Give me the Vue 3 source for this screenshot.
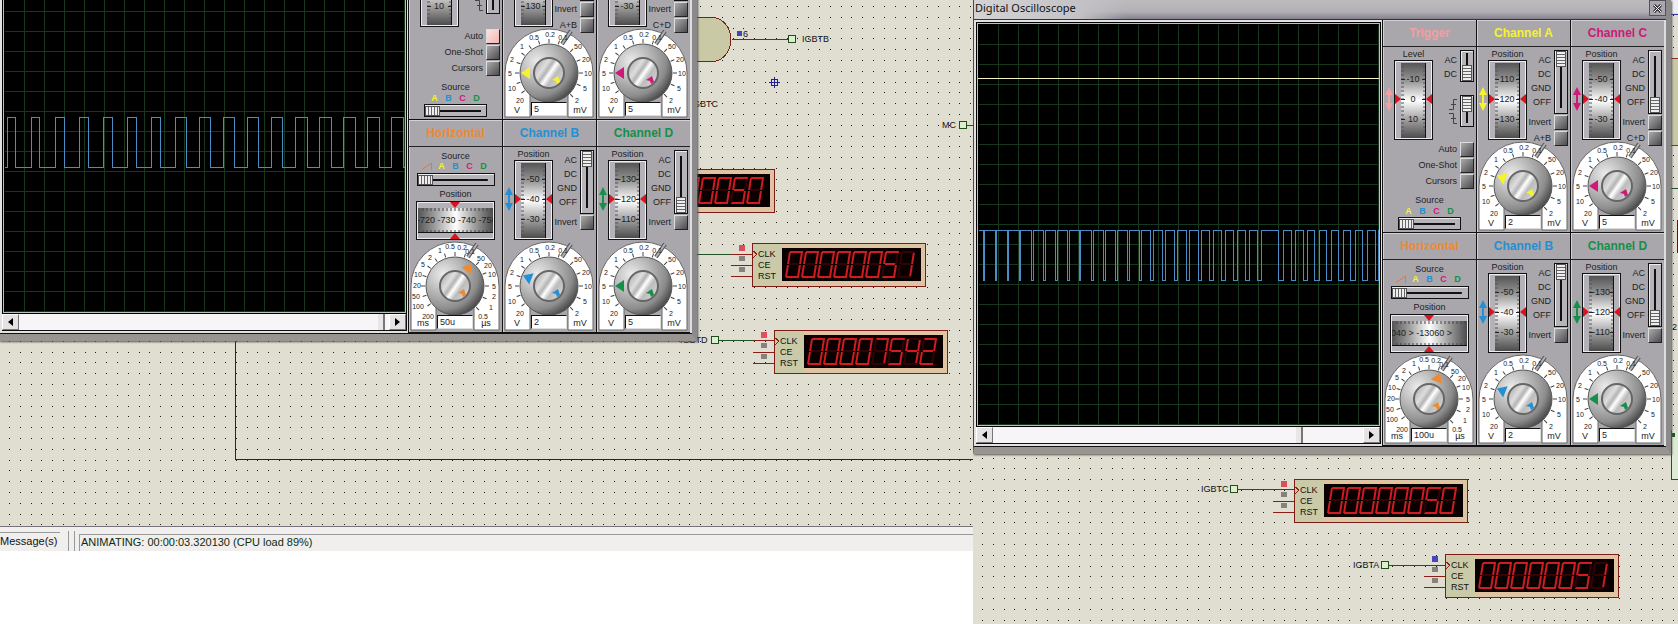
<script setup>
const vertical = (title, key, color, scale, coupling, angle, volts, sum) => ({
  kind: 'channel', title, key, color, caption: 'Position', scale, coupling, angle, value: volts, sum,
})

const timeScale = [
  ['0.5', -14, -120], ['0.2', 20, -118], ['0.1', 46, -105], ['50', 79, -84], ['20', 100, -64],
  ['10', 112, -35], ['5', 118, 0], ['2', 116, 29], ['1', 108, 64], ['0.5', 84, 89],
  ['1', -46, -108], ['2', -74, -88], ['5', -97, -66], ['10', -112, -36], ['20', -114, -4],
  ['50', -116, 31], ['100', -110, 61], ['200', -82, 89],
]
const voltScale = [
  ['0.2', 2, -118], ['0.1', 43, -108], ['50', 86, -82], ['20', 110, -42], ['10', 118, 0],
  ['5', 108, 44], ['2', 84, 81], ['0.5', -44, -108], ['1', -82, -80], ['2', -110, -42],
  ['5', -118, 0], ['10', -112, 45], ['20', -88, 82],
]
const tickAngles = [-126, -108, -90, -72, -54, -36, -18, 0, 18, 45, 67, 90, 112, 135]

function squareWave(intervals, startHigh) {
  const high = 206
  const low = 256
  let d = `M0 ${startHigh ? high : low}`
  for (const [a, b] of intervals) {
    d += startHigh ? `H${a}V${low}H${b}V${high}` : `H${a}V${high}H${b}V${low}`
  }
  return d + 'H401'
}

const pulses = [8, 8, 9, 9, 9, 9, 9, 11, 11, 11, 11, 11, 12, 12, 12, 12, 12]
const leftWave = squareWave(pulses.map((w, i) => [3 + i * 24, 3 + i * 24 + w]), false)
const rightWave = squareWave([
  [5, 6], [17, 18], [29, 30], [41, 42], [53, 55], [65, 67], [77, 79], [89, 91], [101, 102], [113, 115],
  [125, 127], [137, 139], [149, 151], [161, 163], [172, 175], [184, 187], [196, 199], [208, 211],
  [220, 223], [231, 235], [243, 247], [255, 259], [267, 271], [279, 283], [300, 305], [313, 317],
  [325, 329], [336, 341], [348, 353], [360, 365], [372, 377], [384, 389], [397, 400],
], true)

function scope(id, o) {
  return {
    id, wave: o.wave, trace: o.trace, thumb: o.thumb,
    cells: [
      { kind: 'trigger', title: 'Trigger', key: 't', color: '#f2a0a2', caption: 'Level', scale: ['-10', '0', '10'], auto: o.auto },
      vertical('Channel A', 'a', '#f6f22c', ['110', '120', '130'], 0, o.angleA, o.voltA, 'A+B'),
      vertical('Channel C', 'c', '#d01878', ['-50', '-40', '-30'], 3, 0, '5', 'C+D'),
      { kind: 'horizontal', title: 'Horizontal', key: 'h', color: '#ee8a32', strip: o.strip, angle: o.angleH, value: o.time },
      vertical('Channel B', 'b', '#2490d4', ['-50', '-40', '-30'], 0, 22, '2', ''),
      vertical('Channel D', 'd', '#149048', ['-130', '-120', '-110'], 3, 0, '5', ''),
    ],
  }
}

const panes = [
  {
    id: 'left', dotX: 9, dotY: 6,
    scope: scope('left', { wave: leftWave, trace: false, thumb: 97, auto: true, angleA: 0, voltA: '5', strip: '-720 -730 -740 -750', angleH: 127, time: '50u' }),
    counters: [
      { x: 601, y: 169, value: '00000050', mark: '#d85058' },
      { x: 752, y: 243, value: '00000051', mark: '#d85058' },
      { x: 774, y: 330, value: '00007542', mark: '#e0505c' },
    ],
  },
  {
    id: 'right', dotX: 9, dotY: 4,
    scope: scope('right', { wave: rightWave, trace: true, thumb: 82, auto: false, angleA: 22, voltA: '2', strip: '040 > -13060 >', angleH: 113, time: '100u' }),
    counters: [
      { x: 321, y: 479, value: '00000050', mark: '#d85058' },
      { x: 472, y: 554, value: '00000051', mark: '#4a48b8' },
    ],
  },
]

const segments = {
  a: [0, 0, 13, 0], b: [12, 1, 12, 12], c: [12, 13, 12, 24], d: [0, 25, 13, 25],
  e: [0, 13, 0, 25], f: [0, 0, 0, 12], g: [1, 12, 11, 12],
}
const lit = { 0: 'abcdef', 1: 'bc', 2: 'abged', 4: 'fgbc', 5: 'afgcd', 7: 'abc' }
const dots = [0, 11, 22, 32, 43]
</script>

<template>
  <main class="page">
    <svg class="defs" aria-hidden="true">
      <defs>
        <linearGradient id="drum" x1="0" y1="0" x2="0" y2="1">
          <stop offset="0" stop-color="#555" /><stop offset=".25" stop-color="#9a9a9a" />
          <stop offset=".5" stop-color="#fff" /><stop offset=".75" stop-color="#a2a2a2" />
          <stop offset="1" stop-color="#4c4c4c" />
        </linearGradient>
        <linearGradient id="drumWide">
          <stop offset="0" stop-color="#555" /><stop offset=".25" stop-color="#a5a5a5" />
          <stop offset=".5" stop-color="#fff" /><stop offset=".75" stop-color="#a0a0a0" />
          <stop offset="1" stop-color="#4c4c4c" />
        </linearGradient>
        <radialGradient id="knob" cx=".3" cy=".3" r=".8">
          <stop offset="0" stop-color="#ececec" /><stop offset=".4" stop-color="#b9b9b9" />
          <stop offset=".75" stop-color="#8c8c8c" /><stop offset="1" stop-color="#3e3e3e" />
        </radialGradient>
        <linearGradient id="cap" x1="0" y1=".15" x2="1" y2=".85">
          <stop offset="0" stop-color="#a8a8a8" /><stop offset=".3" stop-color="#dedede" />
          <stop offset=".42" stop-color="#b4b4b4" /><stop offset=".52" stop-color="#fff" />
          <stop offset=".66" stop-color="#bcbcbc" /><stop offset="1" stop-color="#d8d8d8" />
        </linearGradient>
      </defs>
    </svg>

    <section v-for="pane in panes" :key="pane.id" class="pane" :class="'pane-' + pane.id">
      <div class="canvas">
        <svg class="schematic">
          <defs>
            <pattern :id="'dots-' + pane.id" :x="pane.dotX" :y="pane.dotY" width="54" height="54" patternUnits="userSpaceOnUse">
              <template v-for="y in dots" :key="y">
                <rect v-for="x in dots" :key="x" :x="x" :y="y" width="1" height="1" fill="#1c1c18" />
              </template>
            </pattern>
          </defs>
          <rect width="100%" height="100%" :fill="`url(#dots-${pane.id})`" />

          <g v-if="pane.id === 'left'" fill="none" shape-rendering="crispEdges">
            <path d="M235.500 330V459.500H2000" stroke="#1c1a8c" />
            <path d="M690 17.500H712A19 22 0 0 1 712 61.500H690Z" fill="#cac9a6" stroke="#7c2014" />
            <path d="M732 39.500H745" stroke="#8c1c14" />
            <path d="M745 39.500H788M690 254.500H731M718 340.500H753M967 125.500H980" stroke="#205428" />
            <path d="M731 254.500H752M753 340.500H774" stroke="#8c1c14" />
            <path d="M788.500 35.500h7v7h-7zM711.500 336.500h7v7h-7zM959.500 121.500h7v7h-7z" fill="#dcf0cc" stroke="#204c20" />
            <rect x="737" y="31" width="5" height="5" fill="#4a44b0" />
            <path d="M774.500 77V88M769 82.500H780M771.500 79.500h6v6h-6z" stroke="#20209c" />
          </g>
          <g v-if="pane.id === 'left'" class="net">
            <text x="743" y="37">6</text>
            <text x="802" y="42">IGBTB</text>
            <text x="693" y="107">GBTC</text>
            <text x="942" y="128">MC</text>
            <text x="680" y="343">IGBTD</text>
          </g>

          <g v-if="pane.id === 'right'" fill="none" shape-rendering="crispEdges">
            <rect x="698" y="0" width="40" height="13" fill="#f0f0f4" />
            <path d="M698 14.500H740" stroke="#3838a0" />
            <path d="M690 58.500H740V145.500H690" fill="#cac9a6" stroke="#8c2c1c" />
            <path d="M690 188.500H740M690 435.500H740" stroke="#205428" />
            <rect x="704" y="220" width="30" height="33" fill="#6c0c10" />
            <path d="M698.500 430V479.500H740V436" fill="#dcecd4" stroke="#205428" />
            <rect x="698" y="433" width="4" height="4" fill="#205428" />
            <path d="M265 489.500H300M416 565.500H451" stroke="#205428" />
            <path d="M300 489.500H321M451 565.500H472" stroke="#8c1c14" />
            <path d="M257.500 485.500h7v7h-7zM408.500 561.500h7v7h-7z" fill="#dcf0cc" stroke="#204c20" />
          </g>
          <g v-if="pane.id === 'right'" class="net">
            <text x="228" y="492">IGBTC</text>
            <text x="380" y="568">IGBTA</text>
            <text x="699" y="330">2</text>
          </g>

          <g v-for="c in pane.counters" :key="c.x" :transform="`translate(${c.x} ${c.y})`">
            <g shape-rendering="crispEdges">
              <rect x=".5" y=".5" width="173" height="43" fill="#dec4a2" stroke="#7c1c14" />
              <rect x="1" y="1" width="29" height="42" fill="#cacaa8" />
              <path d="M-21 22.500H0M-21 33.500H0" stroke="#8c1c14" />
              <path d="M1 8l4 3-4 4" fill="none" stroke="#8c1c14" />
              <rect x="-13" y="2" width="6" height="6" :fill="c.mark" />
              <rect x="-13" y="13" width="6" height="5" fill="#88827e" />
              <rect x="-13" y="24" width="6" height="5" fill="#88827e" />
              <rect x="30" y="5" width="139" height="33" fill="#0a0000" />
            </g>
            <g class="pins">
              <text x="6" y="14">CLK</text><text x="6" y="25">CE</text><text x="6" y="36">RST</text>
            </g>
            <g role="img" :aria-label="c.value">
              <g v-for="(n, i) in c.value" :key="i" :transform="`translate(${38 + i * 16} 9) skewX(-9)`">
                <line
                  v-for="(s, name) in segments" :key="name" :x1="s[0]" :y1="s[1]" :x2="s[2]" :y2="s[3]"
                  stroke-width="2" :stroke="lit[n].includes(name) ? '#d01c20' : '#300406'"
                />
              </g>
            </g>
          </g>
        </svg>

        <article class="window">
          <header class="titlebar">
            <span class="caption">Digital Oscilloscope</span>
            <button class="close" aria-label="Close">
              <svg width="9" height="9" viewBox="0 0 9 9"><path d="M1 1l7 7M8 1l-7 7" stroke="#333" stroke-width="3" /><path d="M1 1l7 7M8 1l-7 7" stroke="#fff" /></svg>
            </button>
          </header>
          <div class="body">
            <div class="display">
              <svg class="screen" width="401" height="401" viewBox="0 0 401 401" shape-rendering="crispEdges" fill="none">
                <path v-for="n in 20" :key="n" :d="`M${n * 20} 0V401M0 ${n * 20}H401`" stroke="#18381e" transform="translate(.5 .5)" />
                <path v-if="pane.scope.trace" d="M0 54.500H401" stroke="#f4f0c0" />
                <path :d="pane.scope.wave" stroke="#4a8cc4" transform="translate(.5 .5)" />
              </svg>
              <div class="scroll">
                <button aria-label="Scroll left"><svg width="5" height="8" viewBox="0 0 5 8"><path d="M5 0v8L0 4z" /></svg></button>
                <div class="rail"><span class="thumb" :style="{ left: pane.scope.thumb + '%' }"></span></div>
                <button aria-label="Scroll right"><svg width="5" height="8" viewBox="0 0 5 8"><path d="M0 0v8l5-4z" /></svg></button>
              </div>
            </div>

            <div class="controls">
              <section v-for="cell in pane.scope.cells" :key="cell.key" class="cell">
                <h2 class="name" :style="{ color: cell.color }">{{ cell.title }}</h2>

                <div v-if="cell.kind !== 'horizontal'" class="upper">
                  <svg class="arrows" width="8" height="24" viewBox="0 0 8 24" :fill="cell.color"><path d="M4 0L8 8H5V16H8L4 24L0 16H3V8H0Z" /></svg>
                  <div class="drum">
                    <span class="small">{{ cell.caption }}</span>
                    <svg width="39" height="80" viewBox="0 0 39 80">
                      <rect x=".5" y=".5" width="38" height="79" fill="#b4b2b8" stroke="#111" />
                      <path d="M1.500 79V1.500H38M37.500 2V78.500H2" fill="none" stroke="#eee" />
                      <rect x="7" y="3" width="25" height="75" fill="url(#drum)" />
                      <path v-for="n in 18" :key="n" :d="`M7 ${n * 4 + 3}h3M29 ${n * 4 + 3}h3`" stroke="#555" />
                      <path d="M7 19.500h4M28 19.500h4M7 39.500h4M28 39.500h4M7 59.500h4M28 59.500h4" stroke="#222" />
                      <text v-for="(s, i) in cell.scale" :key="s" x="19" :y="22 + i * 20" text-anchor="middle" class="t9">{{ s }}</text>
                      <path d="M31.500 3V78" stroke="#111" />
                      <path d="M1 34v10l6-5zM38 34v10l-6-5z" fill="#d81420" />
                    </svg>
                  </div>

                  <div v-if="cell.kind === 'channel'" class="side">
                    <div class="select">
                      <label class="stops" :for="`${pane.id}-${cell.key}-in`"><span>AC</span><span>DC</span><span>GND</span><span>OFF</span></label>
                      <input :id="`${pane.id}-${cell.key}-in`" class="vert" type="range" min="0" max="3" :value="cell.coupling">
                    </div>
                    <div class="toggle"><label :for="`${pane.id}-${cell.key}-inv`">Invert</label><button :id="`${pane.id}-${cell.key}-inv`" class="key"></button></div>
                    <div v-if="cell.sum" class="toggle"><label :for="`${pane.id}-${cell.key}-sum`">{{ cell.sum }}</label><button :id="`${pane.id}-${cell.key}-sum`" class="key"></button></div>
                  </div>
                  <div v-else class="side">
                    <div class="select">
                      <label class="stops" :for="`${pane.id}-t-cpl`"><span>AC</span><span>DC</span></label>
                      <input :id="`${pane.id}-t-cpl`" class="vert short" type="range" min="0" max="1" value="1">
                    </div>
                    <div class="select edge">
                      <svg width="8" height="27" viewBox="0 0 8 27" fill="none" stroke="#444"><path d="M0 11.500H4.500V1.500H8M2 6.500H7M0 15.500H4.500V25.500H8M2 20.500H7" /></svg>
                      <input class="vert short" type="range" min="0" max="1" value="0" aria-label="Trigger edge">
                    </div>
                  </div>
                </div>

                <template v-if="cell.kind === 'trigger'">
                  <div class="modes">
                    <div v-for="m in ['Auto', 'One-Shot', 'Cursors']" :key="m" class="toggle">
                      <label :for="`${pane.id}-${m}`">{{ m }}</label>
                      <button :id="`${pane.id}-${m}`" class="key" :class="{ on: m === 'Auto' && cell.auto }"></button>
                    </div>
                  </div>
                  <div class="source">
                    <label class="small" :for="`${pane.id}-t-src`">Source</label>
                    <div class="letters"><b class="a">A</b><b class="b">B</b><b class="c">C</b><b class="d">D</b></div>
                    <input :id="`${pane.id}-t-src`" class="horiz" type="range" min="0" max="3" value="0">
                  </div>
                </template>

                <div v-if="cell.kind === 'horizontal'" class="upper timing">
                  <label class="small" :for="`${pane.id}-h-src`">Source</label>
                  <div class="letters">
                    <svg width="14" height="10" viewBox="0 0 14 10" fill="none" stroke="#e87830"><path d="M1 8.500L10.500 2V9" /></svg>
                    <b class="a">A</b><b class="b">B</b><b class="c">C</b><b class="d">D</b>
                  </div>
                  <input :id="`${pane.id}-h-src`" class="horiz wide" type="range" min="0" max="4" value="0">
                  <span class="small gap">Position</span>
                  <svg width="79" height="39" viewBox="0 0 79 39">
                    <rect x=".5" y=".5" width="78" height="38" fill="#b4b2b8" stroke="#111" />
                    <path d="M1.500 38V1.500H78M77.500 2V37.500H2" fill="none" stroke="#eee" />
                    <svg x="2" y="7" width="75" height="25" viewBox="2 7 75 25">
                      <rect x="2" y="7" width="75" height="25" fill="url(#drumWide)" />
                      <path v-for="n in 18" :key="n" :d="`M${n * 4 + 3} 7v3M${n * 4 + 3} 29v3`" stroke="#444" />
                      <text x="1" y="22" class="t9">{{ cell.strip }}</text>
                    </svg>
                    <path d="M2 31.500H77" stroke="#111" />
                    <path d="M34 1h10l-5 6zM34 38h10l-5-6z" fill="#d81420" />
                  </svg>
                </div>

                <div v-if="cell.kind !== 'trigger'" class="dial">
                  <svg width="92" height="90" viewBox="-46 -45 92 90">
                    <path d="M-44 44V0A44 44 0 0 1 44 0V44H19V20H-19V44Z" fill="#fff" stroke="#666" />
                    <path d="M13 -29L22 -42" stroke="#555" stroke-width="4" />
                    <path d="M13 -29L22 -42" stroke="#b4b2b8" stroke-width="2" />
                    <path v-for="a in tickAngles" :key="a" d="M0 -30V-34" :transform="`rotate(${a})`" stroke="#444" />
                    <g class="t7" text-anchor="middle">
                      <text v-for="(n, i) in cell.kind === 'channel' ? voltScale : timeScale" :key="i" :x="Math.round(n[1] / 3)" :y="Math.round(n[2] / 3) + 3">{{ n[0] }}</text>
                    </g>
                    <circle r="29" fill="url(#knob)" stroke="#555" />
                    <circle r="15" fill="url(#cap)" stroke="#666" stroke-width="2" />
                    <path d="M-28 0L-19 -6V6Z" :fill="cell.color" :transform="`rotate(${cell.angle})`" />
                    <path d="M3 7L9 3L11 9L8 11L7 8Z" :fill="cell.color" />
                    <g class="t9" text-anchor="middle">
                      <text x="-32" y="40">{{ cell.kind === 'channel' ? 'V' : 'ms' }}</text>
                      <text x="31" y="40">{{ cell.kind === 'channel' ? 'mV' : 'µs' }}</text>
                    </g>
                  </svg>
                  <input class="value" type="text" :value="cell.value" :aria-label="cell.title + ' scale'">
                </div>
              </section>
            </div>
          </div>
        </article>
      </div>

      <footer v-if="pane.id === 'left'" class="status">
        <span class="messages">Message(s)</span>
        <span class="grip"></span>
        <span class="anim">ANIMATING: 00:00:03.320130 (CPU load 89%)</span>
      </footer>
    </section>
  </main>
</template>

<style>
body { margin: 0; background: #fff; }
</style>

<style scoped>
.page {
  display: grid;
  grid-template-columns: 973fr 705fr;
  min-height: 100vh;
  overflow: hidden;
  font: 9px "Liberation Sans", Arial, sans-serif;
  color: #222;
}
.defs { position: absolute; width: 0; height: 0; }
.pane { display: grid; min-width: 0; }
.pane-left { grid-template-rows: 526fr 25px 73fr; }
.canvas { position: relative; overflow: hidden; background: #dfded1; }
.schematic { position: absolute; inset: 0; width: 100%; height: 100%; }
.net, .pins { font-size: 9px; fill: #111; }
.t9 { font-size: 9px; fill: #222; }
.t7 { font-size: 7px; fill: #222; }

.window {
  position: absolute;
  top: 0;
  left: 0;
  box-sizing: border-box;
  width: 698px;
  border: solid;
  border-width: 0 5px 7px 1px;
  border-color: #000 #8c898b #989490 #4a4a4a;
  background: #a9a6ac;
  box-shadow: 1px 1px 2px #555;
}
.pane-left .window { top: -113px; left: -1px; }
.titlebar {
  display: flex;
  align-items: center;
  justify-content: space-between;
  box-sizing: border-box;
  height: 20px;
  padding: 0 0 3px 1px;
  border-bottom: 1px solid #33313a;
  background: linear-gradient(90deg, #d4d3d4, #c4c2c6 15%, transparent 22%), linear-gradient(#bdbbbd, #b4b1b5 60%, #85828f);
}
.caption { font: 11px/16px "Noto Sans", sans-serif; color: #111; }
.close {
  display: grid;
  place-items: center;
  width: 17px;
  height: 16px;
  padding: 0;
  border: 1px solid #55535a;
  background: #aaa8ae;
}
.body { display: flex; border-right: 1px solid #222; border-bottom: 1px solid #111; }
.display { flex: 1; padding: 2px 0 1px 2px; background: #e2e2e0; }
.screen { display: block; margin-right: 1px; border: 1px solid #000; outline: 1px solid #b8c4ba; outline-offset: -2px; padding: 1px; background: #000; }
.scroll { display: flex; height: 16px; margin-right: 1px; border-bottom: 1px solid #111; border-right: 1px solid #111; }
.scroll button {
  display: grid;
  place-items: center;
  width: 17px;
  padding: 0;
  border: 1px solid;
  border-color: #fff #777 #777 #fff;
  background: #e4e2e2;
}
.rail { position: relative; flex: 1; background: #f8f5f8; }
.thumb { position: absolute; top: 0; bottom: 0; width: 5px; border-right: 2px solid #777; background: #e8e6e6; }

.controls { display: grid; grid-template-columns: repeat(3, 94px); border-right: 2px solid #ddd; }
.cell {
  box-sizing: border-box;
  height: 213px;
  border-left: 1px solid #111;
  border-bottom: 1px solid #111;
  box-shadow: inset 1px 1px #d2d0d4;
  background: #a9a6ac;
}
.name {
  box-sizing: border-box;
  height: 27px;
  margin: 0;
  border-bottom: 1px solid #222;
  font-size: 12px;
  line-height: 27px;
  text-align: center;
}
.upper { display: flex; height: 94px; }
.arrows { margin: 40px 1px 0 2px; }
.drum { display: flex; flex-direction: column; align-items: center; width: 39px; padding-top: 1px; }
.small { font-size: 9px; line-height: 12px; }
.drum svg { display: block; flex: none; }
.side { flex: 1; padding: 3px 2px 0 0; }
.select { display: flex; justify-content: flex-end; gap: 3px; }
.stops { display: flex; flex-direction: column; padding-top: 3px; text-align: right; line-height: 14px; }
.edge { padding-top: 13px; }
.edge svg { margin-top: 3px; }
.toggle { display: flex; justify-content: flex-end; align-items: center; gap: 3px; height: 16px; white-space: nowrap; }
.key {
  width: 14px;
  height: 15px;
  padding: 0;
  border: 1px solid;
  border-color: #ddd #222 #222 #ddd;
  background: linear-gradient(135deg, #aaa, #4c4c50);
}
.key.on { background: linear-gradient(135deg, #fbe4e2, #f2b4b2); }

input[type='range'] { appearance: none; box-sizing: border-box; margin: 0; border: 1px solid #111; }
.vert {
  writing-mode: vertical-lr;
  width: 14px;
  height: 64px;
  background: linear-gradient(#111, #111) center / 2px 84% no-repeat, #b6b4b8;
  box-shadow: inset 1px 1px #eee;
}
.vert.short { height: 32px; }
.vert::-webkit-slider-thumb {
  appearance: none;
  box-sizing: border-box;
  width: 10px;
  height: 16px;
  border: 1px solid #555;
  background: repeating-linear-gradient(#eee 0 2px, #666 2px 3px);
}
.horiz {
  width: 63px;
  height: 13px;
  background: linear-gradient(#111, #111) center / 84% 2px no-repeat, #b6b4b8;
  box-shadow: inset 1px 1px #eee;
}
.horiz.wide { width: 78px; }
.horiz::-webkit-slider-thumb {
  appearance: none;
  box-sizing: border-box;
  width: 15px;
  height: 10px;
  border: 1px solid #555;
  background: repeating-linear-gradient(90deg, #eee 0 2px, #666 2px 3px);
}
.modes { padding-right: 2px; }
.source { display: flex; flex-direction: column; align-items: center; padding-top: 5px; }
.letters { display: flex; height: 11px; line-height: 11px; }
.letters b { width: 14px; text-align: center; }
.a { color: #f6f22c; }
.b { color: #2490d4; }
.c { color: #d01878; }
.d { color: #149048; }
.timing { box-sizing: border-box; flex-direction: column; align-items: center; padding-top: 4px; }
.timing .small { line-height: 10px; }
.timing .letters { height: 10px; margin-bottom: 2px; line-height: 10px; }
.timing .letters svg { flex: none; }
.timing .gap { margin: 3px 0 2px; }
.timing > svg { flex: none; }

.dial { position: relative; width: 92px; }
.dial svg { display: block; }
.value {
  position: absolute;
  left: 28px;
  bottom: 2px;
  box-sizing: border-box;
  width: 36px;
  height: 14px;
  padding: 0 2px;
  border: 1px solid;
  border-color: #111 #ddd #ddd #111;
  background: #fff;
  font: 9px "Liberation Sans", Arial, sans-serif;
  color: #223;
}

.status { display: flex; align-items: stretch; border-top: 1px solid #77757a; background: #f0efee; font-size: 11px; line-height: 16px; }
.messages { width: 60px; margin-top: 5px; border-top: 1px solid #999; color: #111; }
.grip { width: 5px; margin: 4px 4px 0 8px; border: solid #999; border-width: 0 1px; }
.anim { flex: 1; margin-top: 7px; padding-left: 1px; border: solid #999; border-width: 1px 0 0 1px; line-height: 14px; color: #0c2c10; }
</style>
